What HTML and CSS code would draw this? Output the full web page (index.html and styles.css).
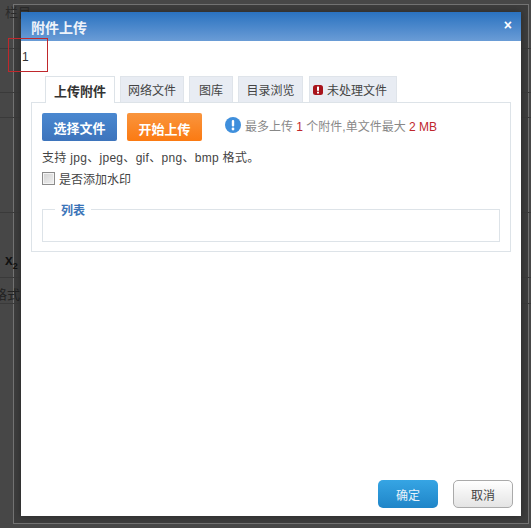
FILE: index.html
```html
<!DOCTYPE html>
<html lang="zh">
<head>
<meta charset="utf-8">
<title>附件上传</title>
<link rel="stylesheet" href="styles.css">
</head>
<body>
<div class="backdrop">
  <div class="bg-frame"></div>
  <div class="bg-line l1"></div>
  <div class="bg-line l2"></div>
  <div class="bg-line l3"></div>
  <div class="bg-line l4"></div>
  <div class="bg-line l5"></div>
  <div class="bg-line l6"></div>
  <span class="bg-text t1">栏目</span>
  <span class="bg-text t2"><b>x</b><sub>2</sub></span>
  <span class="bg-text t3">格式</span>
</div>
<div class="dialog">
  <header class="titlebar">
    <h1>附件上传</h1>
    <span class="close">×</span>
  </header>
  <div class="content">
    <div class="counter">1</div>
    <div class="tabs">
      <span class="tab active">上传附件</span>
      <span class="tab w-net">网络文件</span>
      <span class="tab w-lib">图库</span>
      <span class="tab w-dir">目录浏览</span>
      <span class="tab w-pending">
        <svg class="alert" viewBox="0 0 10 10" width="10" height="10"><rect width="10" height="10" rx="2.5" fill="#a8141c"/><rect x="4" y="1.6" width="2" height="4.2" fill="#fff"/><rect x="4" y="6.7" width="2" height="1.8" fill="#fff"/></svg>
        未处理文件
      </span>
    </div>
    <div class="panel">
      <div class="actions">
        <span class="btn blue">选择文件</span>
        <span class="btn orange">开始上传</span>
        <span class="limit">
          <svg class="info" viewBox="0 0 16 16" width="16" height="16"><circle cx="8" cy="8" r="8" fill="#3f8fdc"/><rect x="6.8" y="3" width="2.4" height="6.5" rx="1" fill="#fff"/><circle cx="8" cy="12" r="1.4" fill="#fff"/></svg>
          <span>最多上传 <em>1</em> 个附件,单文件最大 <em>2 MB</em></span>
        </span>
      </div>
      <p class="formats">支持 jpg、jpeg、gif、png、bmp 格式。</p>
      <label class="check"><input type="checkbox"><span>是否添加水印</span></label>
      <fieldset class="list">
        <legend>列表</legend>
      </fieldset>
    </div>
  </div>
  <footer class="footer">
    <span class="fbtn ok">确定</span>
    <span class="fbtn cancel">取消</span>
  </footer>
</div>
<div class="marker"></div>
</body>
</html>
```
FILE: styles.css
```css
* { box-sizing: border-box; }
html, body { margin: 0; height: 528px; overflow: hidden; }
body {
  position: relative;
  width: 531px;
  background: #474747;
  font-family: "Liberation Sans", "Noto Sans CJK SC", sans-serif;
  font-size: 12px;
  color: #333;
  padding: 12px 0 0 21px;
}
.backdrop { position: absolute; inset: 0; }
.bg-frame {
  position: absolute;
  left: 13px; top: 4px; right: 2px; bottom: 4px;
  background: #3d3d3d;
  border: 1px solid #737373;
}
.bg-line { position: absolute; left: 0; right: 0; height: 1px; background: #3a3a3a; }
.l1 { top: 48px; }
.l2 { top: 92px; }
.l3 { top: 117px; }
.l4 { top: 212px; }
.l5 { top: 277px; }
.l6 { top: 303px; }
.bg-text { position: absolute; color: #2a2a2a; font-size: 13px; }
.t1 { left: 5px; top: 2px; }
.t2 { left: 5px; top: 252px; font-size: 14px; color: #111; }
.t2 sub { font-size: 9px; font-weight: bold; }
.t3 { left: -6px; top: 284px; color: #222; }
.dialog {
  position: relative;
  width: 500px;
  height: 504px;
  background: #fff;
  display: flex;
  flex-direction: column;
  box-shadow: 0 0 7px rgba(0, 0, 0, .35);
}
.titlebar {
  height: 29px;
  flex: none;
  background: linear-gradient(#2a72c0, #6a9cd6);
  color: #fff;
  display: flex;
  align-items: center;
  justify-content: space-between;
  padding: 0 9px 0 10px;
}
.titlebar h1 { margin: 0; font-size: 14px; font-weight: bold; color: #eef3fa; }
.close { font-size: 14px; font-weight: bold; line-height: 14px; margin-bottom: 3px; }
.content { flex: 1; padding: 0 10px; }
.counter { height: 35px; padding: 8px 0 0 1px; line-height: 16px; color: #333; font-size: 12px; margin-left: -10px; }
.tabs { display: flex; padding-left: 14px; gap: 5px; height: 27px; position: relative; z-index: 1; }
.tab {
  height: 26px;
  width: 64px;
  background: #e8ecf3;
  border: 1px solid #dfe4ea;
  border-bottom: 0;
  display: flex;
  align-items: center;
  justify-content: center;
  gap: 4px;
  font-size: 12px;
  color: #444;
}
.tab.active {
  width: 70px;
  height: 27px;
  background: #fff;
  font-weight: bold;
  color: #333;
  border-color: #dde3e8;
  font-size: 13px;
}
.w-lib { width: 44px; }
.w-dir { width: 65px; }
.w-pending { width: 88px; margin-left: 1px; justify-content: flex-start; padding-left: 3px; }
.panel {
  border: 1px solid #dde3e8;
  height: 150px;
  margin-top: -1px;
  padding: 10px 10px 0;
}
.actions { display: flex; align-items: flex-start; height: 28px; }
.btn {
  width: 75px;
  height: 28px;
  border-radius: 2px;
  color: #fff;
  font-weight: bold;
  font-size: 13px;
  display: flex;
  align-items: center;
  justify-content: center;
}
.blue { background: linear-gradient(#4a88d0, #3d74bc); }
.orange { background: linear-gradient(#f9953e, #fb7a12); margin-left: 10px; padding-top: 3px; }
.limit { display: flex; align-items: center; margin-left: 23px; gap: 4px; height: 16px; margin-top: 4px; color: #888; white-space: nowrap; }
.limit em { font-style: normal; color: #c0272d; }
.info { flex: none; }
.formats { margin: 9px 0 0; line-height: 16px; color: #444; letter-spacing: .3px; }
.check { display: flex; align-items: center; margin-top: 4px; height: 16px; color: #444; gap: 4px; }
.check input {
  appearance: none;
  margin: 0;
  width: 13px;
  height: 13px;
  border: 1px solid #8c8c8c;
  background: linear-gradient(135deg, #d2d2d2, #f0f0f0);
  box-shadow: inset 0 0 0 1px #f4f4f4;
}
.list {
  margin: 14px 0 0;
  height: 42px;
  padding: 0;
  border: 1px solid #dde3e8;
}
.list legend {
  margin-left: 12px;
  padding: 4px 6px 0;
  font-weight: bold;
  color: #3b74b8;
  font-size: 12px;
  line-height: 14px;
}
.footer { height: 36px; flex: none; display: flex; justify-content: flex-end; gap: 15px; padding-right: 8px; }
.fbtn {
  width: 60px;
  height: 28px;
  border-radius: 5px;
  display: flex;
  align-items: center;
  justify-content: center;
  font-size: 12px;
}
.ok { background: linear-gradient(#36a5e4, #1f85c8); color: #e8f3fb; }
.cancel { background: linear-gradient(#fff, #e4e4e4); border: 1px solid #aaa; color: #444; }
.marker {
  position: absolute;
  left: 8px; top: 38px;
  width: 40px; height: 34px;
  border: 1px solid #c0282c;
}
```
